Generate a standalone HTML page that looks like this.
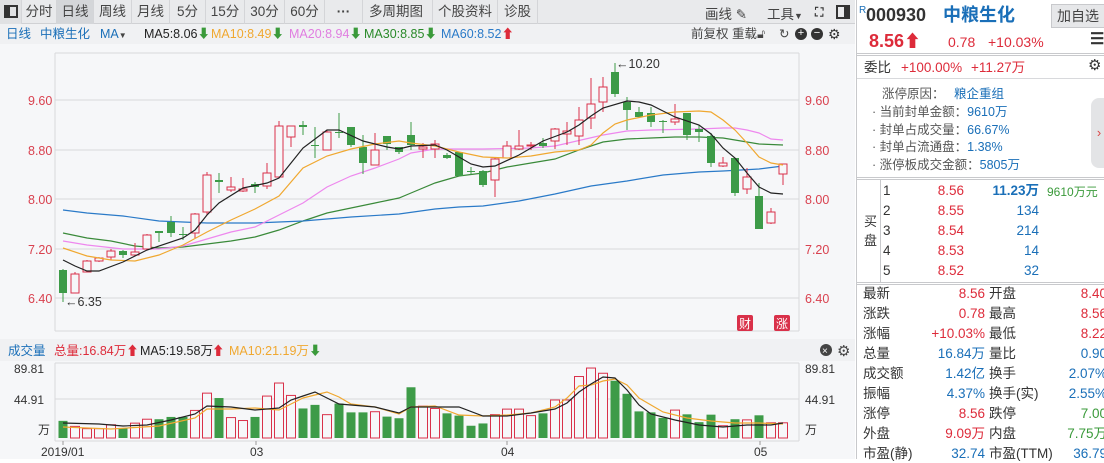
<!DOCTYPE html>
<html><head><meta charset="utf-8">
<style>
*{margin:0;padding:0;box-sizing:border-box}
body{width:1104px;height:459px;overflow:hidden;background:#fff;font-family:"Liberation Sans","Noto Sans CJK SC",sans-serif;position:relative;color:#333}
.a{position:absolute;white-space:nowrap}
#tb{position:absolute;left:0;top:0;width:855px;height:24px;background:#e9eaec;border-bottom:1px solid #d0d1d4}
.tab{position:absolute;top:0;height:24px;line-height:24px;font-size:13.5px;color:#444;text-align:center;border-right:1px solid #d4d5d8}
#lg{position:absolute;left:0;top:24px;width:855px;height:20px;background:#f0f1f3;font-size:12.5px;line-height:20px}
#ch{position:absolute;left:0;top:44px;width:855px;height:415px;background:#f6f7f9}
#rp{position:absolute;left:856px;top:0;width:248px;height:459px;background:#fff;border-left:1px solid #c8c9cc;font-size:13.5px}
#rp .a{line-height:18px}
.red{color:#dd2b3a}.blue{color:#1a6fb8}.grn{color:#3a9a3a}
.r{text-align:right}
</style></head><body>
<div id="tb">
 <div class="tab" style="left:0;width:22px;background:#e0e1e3"><span style="display:inline-block;width:14px;height:13px;border:2px solid #333;border-left-width:6px;vertical-align:-2px"></span></div>
 <div class="tab" style="left:22px;width:35px">分时</div>
 <div class="tab" style="left:57px;width:37px;background:#d4d6d9">日线</div>
 <div class="tab" style="left:94px;width:38px">周线</div>
 <div class="tab" style="left:132px;width:38px">月线</div>
 <div class="tab" style="left:170px;width:36px">5分</div>
 <div class="tab" style="left:206px;width:39px">15分</div>
 <div class="tab" style="left:245px;width:40px">30分</div>
 <div class="tab" style="left:285px;width:40px">60分</div>
 <div class="tab" style="left:325px;width:38px;font-weight:bold">···</div>
 <div class="tab" style="left:363px;width:70px;text-align:left;padding-left:6px">多周期图 <span style="font-size:9px;margin-left:6px">▼</span></div>
 <div class="tab" style="left:433px;width:65px">个股资料</div>
 <div class="tab" style="left:498px;width:40px">诊股</div>
 <div class="a" style="left:705px;top:3px;font-size:13.5px;color:#444">画线 ✎</div>
 <div class="a" style="left:767px;top:3px;font-size:13.5px;color:#444">工具<span style="font-size:9px">▼</span></div>
 <div class="a" style="left:815px;top:5px;font-size:12px;color:#333;font-weight:bold">⛶</div>
 <div class="a" style="left:836px;top:5px;width:14px;height:14px;border:2px solid #333;border-right-width:6px"></div>
</div>
<div id="lg">
 <span class="a blue" style="left:6px">日线</span>
 <span class="a blue" style="left:40px">中粮生化</span>
 <span class="a blue" style="left:100px">MA<span style="font-size:8px;color:#444">▼</span></span>
 <span class="a" style="left:144px;color:#222">MA5:8.06<span class="grn">⬇</span></span>
 <span class="a" style="left:211px;color:#f0a830">MA10:8.49<span class="grn">⬇</span></span>
 <span class="a" style="left:289px;color:#e07de0">MA20:8.94<span class="grn">⬇</span></span>
 <span class="a" style="left:364px;color:#2a8a2a">MA30:8.85<span class="grn">⬇</span></span>
 <span class="a" style="left:441px;color:#2a7ac8">MA60:8.52<span class="red">⬆</span></span>
 <span class="a" style="left:691px;color:#444">前复权 重载</span>
 <span class="a" style="left:757px;color:#444">🔓︎</span>
 <span class="a" style="left:779px;color:#444">↻</span>
 <span class="a" style="left:795px;top:4px;width:12px;height:12px;border-radius:6px;background:#333;color:#fff;font-size:11px;line-height:11px;text-align:center">+</span>
 <span class="a" style="left:811px;top:4px;width:12px;height:12px;border-radius:6px;background:#333;color:#fff;font-size:11px;line-height:11px;text-align:center">−</span>
 <span class="a" style="left:828px;color:#333;font-size:14px">⚙</span>
</div>
<div id="ch"></div>
<svg id="sv" width="855" height="459" style="position:absolute;left:0;top:0" font-family="Liberation Sans, Noto Sans CJK SC, sans-serif"></svg>

<div id="rp">
 <div class="a blue" style="left:2px;top:2px;font-size:10px">R</div>
 <div class="a" style="left:9px;top:6px;font-size:18px;font-weight:bold;color:#333">000930</div>
 <div class="a blue" style="left:86px;top:6px;font-size:18px;font-weight:bold">中粮生化</div>
 <div class="a" style="left:194px;top:4px;width:54px;height:24px;background:#e6e7e9;border:1px solid #c8c9cc;font-size:14px;line-height:22px;text-align:center;color:#444">加自选</div>
 <div class="a red" style="left:12px;top:32px;font-size:18px;font-weight:bold">8.56<span style="font-size:17px">⬆</span></div>
 <div class="a red" style="left:91px;top:33px;font-size:14px">0.78</div>
 <div class="a red" style="left:131px;top:33px;font-size:14px">+10.03%</div>
 <div class="a" style="left:233px;top:31px;font-size:16px;font-weight:bold;color:#333">☰</div>
 <div class="a" style="left:0;top:53px;width:248px;height:1px;background:#c8c9cc"></div>
 <div class="a" style="left:0;top:55px;width:248px;height:1px;background:#c8c9cc"></div>
 <div class="a" style="left:7px;top:59px;color:#333">委比</div>
 <div class="a red" style="left:44px;top:59px">+100.00%</div>
 <div class="a red" style="left:114px;top:59px">+11.27万</div>
 <div class="a" style="left:231px;top:57px;font-size:15px;color:#333">⚙</div>
 <div class="a" style="left:0;top:78px;width:248px;height:1px;background:#d8d9dc"></div>
 <div class="a" style="left:25px;top:85px;font-size:12.5px;color:#555">涨停原因： <span class="blue" style="margin-left:6px">粮企重组</span></div>
 <div class="a" style="left:15px;top:103px;font-size:12.5px;color:#555">· 当前封单金额：<span class="blue">9610万</span></div>
 <div class="a" style="left:15px;top:121px;font-size:12.5px;color:#555">· 封单占成交量：<span class="blue">66.67%</span></div>
 <div class="a" style="left:15px;top:138px;font-size:12.5px;color:#555">· 封单占流通盘：<span class="blue">1.38%</span></div>
 <div class="a" style="left:15px;top:156px;font-size:12.5px;color:#555">· 涨停板成交金额：<span class="blue">5805万</span></div>
 <div class="a" style="left:234px;top:98px;width:16px;height:70px;background:#e3e4e6;border-radius:8px 0 0 8px;color:#d44;font-size:13px;line-height:70px;text-align:center">›</div>
 <div class="a" style="left:0;top:177px;width:248px;height:1px;background:#c8c9cc"></div>
 <div class="a" style="left:0;top:179px;width:248px;height:1px;background:#c8c9cc"></div>
 <div class="a" style="left:23px;top:180px;width:1px;height:102px;background:#c8c9cc"></div>
 <div class="a" style="left:7px;top:212px;color:#333;line-height:19px;font-size:13px">买<br>盘</div>
 <div class="a" style="left:0;top:282px;width:248px;height:1px;background:#c8c9cc"></div>
 <div class="a" style="left:0;top:284px;width:248px;height:1px;background:#c8c9cc"></div>
</div>
<script>
var NS="http://www.w3.org/2000/svg",sv=document.getElementById('sv');
function el(t,a,txt){var e=document.createElementNS(NS,t);for(var k in a)e.setAttribute(k,a[k]);if(txt!=null)e.textContent=txt;sv.appendChild(e);return e}
el('line',{x1:55,y1:53,x2:799,y2:53,stroke:'#d8d9dc'});
el('line',{x1:55,y1:53,x2:55,y2:331,stroke:'#d8d9dc'});
el('line',{x1:799,y1:53,x2:799,y2:331,stroke:'#d8d9dc'});
el('line',{x1:55,y1:331,x2:799,y2:331,stroke:'#d8d9dc'});
[[100,'9.60'],[150,'8.80'],[199,'8.00'],[249,'7.20'],[298,'6.40']].forEach(function(g){
 el('line',{x1:55,y1:g[0],x2:799,y2:g[0],stroke:'#d8d9dc'});
 el('text',{x:28,y:g[0]+5,fill:'#d9414f','font-size':12.5},g[1]);
 el('text',{x:805,y:g[0]+5,fill:'#d9414f','font-size':12.5},g[1]);
});
var C=[['g',270,293,269,302],['r',274,293,272,293],['r',261,272,260,272],['r',258,261,257,262],['r',251,257,249,260],['g',251,255,250,258],['r',252,255,243,256],['r',235,249,234,250],['g',231,233,231,242],['g',222,233,216,237],['g',234,234,227,240],['r',214,233,213,238],['r',175,212,172,215],['g',180,182,173,193],['r',187,190,177,192],['r',189,191,178,192],['g',184,187,182,193],['r',173,186,163,189],['r',126,177,121,178],['r',126,137,126,147],['g',125,127,121,135],['g',145,145,127,158],['r',132,150,130,150],['g',132,132,113,138],['g',127,145,127,147],['g',147,163,135,174],['r',150,165,133,165],['g',136,144,136,150],['g',147,152,147,154],['g',135,145,122,150],
['r',147,149,143,158],['r',144,149,140,158],['g',155,158,153,159],['g',152,176,152,176],['g',171,172,167,175],['g',171,185,170,187],['r',159,180,157,197],['r',146,158,141,158],['r',146,149,130,150],['r',145,145,142,150],['g',143,146,138,148],['r',129,141,128,149],['r',131,134,122,145],['r',120,136,107,145],['r',104,118,78,129],['r',87,102,77,112],['g',72,94,63,97],['g',102,110,97,130],['g',112,117,107,118],['g',113,122,107,127],['g',121,121,120,133],['r',119,122,104,125],['g',113,135,113,140],['g',129,132,125,142],['g',136,163,133,167],['r',163,166,157,167],['g',158,193,158,196],['r',177,189,168,194],['g',196,229,183,229],['r',212,223,208,224],['r',164,174,164,185]];
function line(pts,col){el('polyline',{points:pts.map(function(p){return p.join(',')}).join(' '),fill:'none',stroke:col,'stroke-width':1.2})}
line([[63,233],[87,238],[111,241],[135,246],[159,248],[183,247],[207,244],[231,241],[255,237],[279,230],[303,221],[327,213],[351,208],[375,203],[399,198],[411,193],[435,183],[459,176],[483,173],[507,167],[531,163],[555,159],[579,150],[603,142],[627,139],[651,138],[675,137],[699,137],[723,138],[735,140],[759,144],[783,145]],'#3a8a3a');
line([[63,210],[87,213],[123,216],[159,221],[207,223],[255,223],[303,221],[351,217],[399,214],[435,209],[459,207],[483,206],[519,201],[555,194],[591,186],[627,181],[663,175],[699,172],[723,171],[759,169],[783,166]],'#2a7ac8');
line([[63,241],[87,245],[123,249],[159,249],[183,246],[207,239],[231,232],[255,227],[279,215],[303,203],[327,187],[351,176],[375,168],[399,159],[411,153],[435,149],[483,149],[531,148],[555,146],[603,135],[627,131],[651,130],[699,129],[723,128],[735,128],[747,130],[759,133],[771,139],[783,140]],'#ee88ee');
C.forEach(function(c,i){var x=63+i*12,col=c[0]=='r'?'#d9314a':'#3d9b48';
 el('line',{x1:x,y1:c[3],x2:x,y2:c[4],stroke:col,'stroke-width':1});
 var h=Math.max(c[2]-c[1],1);
 el('rect',{x:x-4,y:c[1],width:8,height:h,fill:c[0]=='r'?'#f6f7f9':col,stroke:col,'stroke-width':c[0]=='r'?1:0});
});
line([[63,248],[87,256],[111,260],[135,261],[159,255],[183,245],[207,232],[231,220],[255,209],[279,196],[303,168],[327,156],[351,149],[375,144],[399,141],[411,143],[435,146],[459,152],[483,157],[507,158],[531,156],[555,152],[579,150],[591,145],[603,133],[615,124],[627,120],[651,115],[675,112],[699,111],[711,112],[723,120],[735,130],[747,143],[759,157],[771,163],[783,165]],'#f0a830');
line([[63,260],[75,266],[87,271],[99,271],[123,262],[147,250],[183,238],[195,230],[207,215],[219,203],[243,188],[267,183],[279,178],[303,148],[327,130],[339,130],[363,141],[387,147],[399,149],[411,146],[435,145],[447,150],[471,164],[483,167],[495,166],[519,155],[543,141],[567,132],[579,125],[591,116],[603,108],[627,101],[639,102],[651,105],[663,111],[675,117],[699,125],[711,134],[723,148],[735,158],[747,173],[759,187],[771,193],[783,194]],'#222');
el('text',{x:65,y:306,fill:'#333','font-size':12.5},'←6.35');
el('text',{x:616,y:68,fill:'#333','font-size':12.5},'←10.20');
[[737,'财'],[774,'涨']].forEach(function(b){el('rect',{x:b[0],y:315,width:16,height:16,fill:'#d9314a',rx:2});el('text',{x:b[0]+2,y:328,fill:'#fff','font-size':12},b[1])});
el('rect',{x:0,y:339,width:855,height:22,fill:'#f0f1f3'});
el('text',{x:8,y:355,fill:'#1a6fb8','font-size':12.5},'成交量');
el('text',{x:54,y:355,fill:'#dd2b3a','font-size':12.5},'总量:16.84万⬆');
el('text',{x:140,y:355,fill:'#222','font-size':12.5},'MA5:19.58万');
el('text',{x:212,y:355,fill:'#dd2b3a','font-size':12.5},'⬆');
el('text',{x:229,y:355,fill:'#f0a830','font-size':12.5},'MA10:21.19万');
el('text',{x:309,y:355,fill:'#3a9a3a','font-size':12.5},'⬇');
el('circle',{cx:826,cy:350,r:6,fill:'#444'});el('text',{x:822,y:354,fill:'#fff','font-size':10},'×');
el('text',{x:837,y:356,fill:'#444','font-size':15},'⚙');
el('line',{x1:55,y1:363,x2:799,y2:363,stroke:'#d8d9dc'});
el('line',{x1:55,y1:363,x2:55,y2:441,stroke:'#d8d9dc'});
el('line',{x1:799,y1:363,x2:799,y2:441,stroke:'#d8d9dc'});
el('line',{x1:55,y1:441,x2:799,y2:441,stroke:'#d8d9dc'});
el('line',{x1:55,y1:399,x2:799,y2:399,stroke:'#d8d9dc'});
el('text',{x:14,y:373,fill:'#333','font-size':12},'89.81');
el('text',{x:14,y:404,fill:'#333','font-size':12},'44.91');
el('text',{x:38,y:434,fill:'#333','font-size':12},'万');
el('text',{x:805,y:373,fill:'#333','font-size':12},'89.81');
el('text',{x:805,y:404,fill:'#333','font-size':12},'44.91');
el('text',{x:805,y:434,fill:'#333','font-size':12},'万');
[[63,'2019/01',-22],[256,'03',-6],[507,'04',-6],[760,'05',-6]].forEach(function(d){el('line',{x1:d[0],y1:441,x2:d[0],y2:445,stroke:'#999'});el('text',{x:d[0]+d[2],y:456,fill:'#333','font-size':12},d[1])});
var V=[248,265,272,272,260,270,255,243,243,236,236,216,163,178,238,247,236,172,132,170,210,199,229,195,222,222,220,235,240,145,203,210,225,232,263,256,229,212,212,232,225,184,184,112,86,102,125,165,219,222,239,215,228,252,229,263,243,245,231,254,254];
V.forEach(function(v,i){var x=63+i*12,top=340+v*0.326,col=C[i][0]=='r'?'#d9314a':'#3d9b48';
 el('rect',{x:x-4.5,y:top,width:9,height:438-top,fill:C[i][0]=='r'?'#f6f7f9':col,stroke:col,'stroke-width':C[i][0]=='r'?1:0});});
line([[63,427],[111,429],[159,426],[195,418],[207,409],[231,409],[255,408],[279,410],[291,404],[303,398],[315,395],[327,392],[339,397],[351,404],[375,407],[399,414],[411,407],[435,406],[459,415],[483,416],[507,415],[531,413],[555,407],[567,398],[579,386],[591,385],[603,381],[615,379],[627,385],[639,398],[663,412],[687,418],[711,421],[735,423],[759,423],[783,424]],'#f0a830');
line([[63,423],[99,424],[123,426],[147,425],[171,420],[195,414],[207,406],[231,407],[255,410],[279,408],[291,400],[303,396],[315,392],[327,398],[339,404],[363,406],[375,407],[399,413],[411,407],[435,407],[459,407],[483,416],[507,416],[531,413],[555,409],[567,403],[579,392],[591,384],[603,377],[615,378],[627,390],[639,405],[651,414],[675,420],[699,425],[723,427],[747,425],[771,425],[783,423]],'#222');
var rp=document.getElementById('rp');
function add(html,style,cls){var d=document.createElement('div');d.className='a '+(cls||'');d.style.cssText=style;d.innerHTML=html;rp.appendChild(d)}
var B=[['1','8.56','11.23万'],['2','8.55','134'],['3','8.54','214'],['4','8.53','14'],['5','8.52','32']];
B.forEach(function(b,i){var y=182+i*20;
 add(b[0],'left:26px;top:'+y+'px;color:#333');
 add(b[1],'left:60px;width:47px;top:'+y+'px;text-align:right','red');
 add(b[2],'left:120px;width:62px;top:'+y+'px;text-align:right;'+(i==0?'font-weight:bold':''),'blue');});
add('9610万元','left:190px;top:183px;font-size:12px','grn');
var S=[['最新','8.56','red','开盘','8.40','red'],['涨跌','0.78','red','最高','8.56','red'],['涨幅','+10.03%','red','最低','8.22','red'],['总量','16.84万','blue','量比','0.90','blue'],['成交额','1.42亿','blue','换手','2.07%','blue'],['振幅','4.37%','blue','换手(实)','2.55%','blue'],['涨停','8.56','red','跌停','7.00','grn'],['外盘','9.09万','red','内盘','7.75万','grn'],['市盈(静)','32.74','blue','市盈(TTM)','36.79','blue']];
S.forEach(function(s,i){var y=285+i*20;
 add(s[0],'left:6px;top:'+y+'px;color:#333');
 add(s[1],'left:50px;width:78px;top:'+y+'px;text-align:right',s[2]);
 add(s[3],'left:132px;top:'+y+'px;color:#333');
 add(s[4],'left:190px;width:60px;top:'+y+'px;text-align:right',s[5]);});
</script>
</body></html>
